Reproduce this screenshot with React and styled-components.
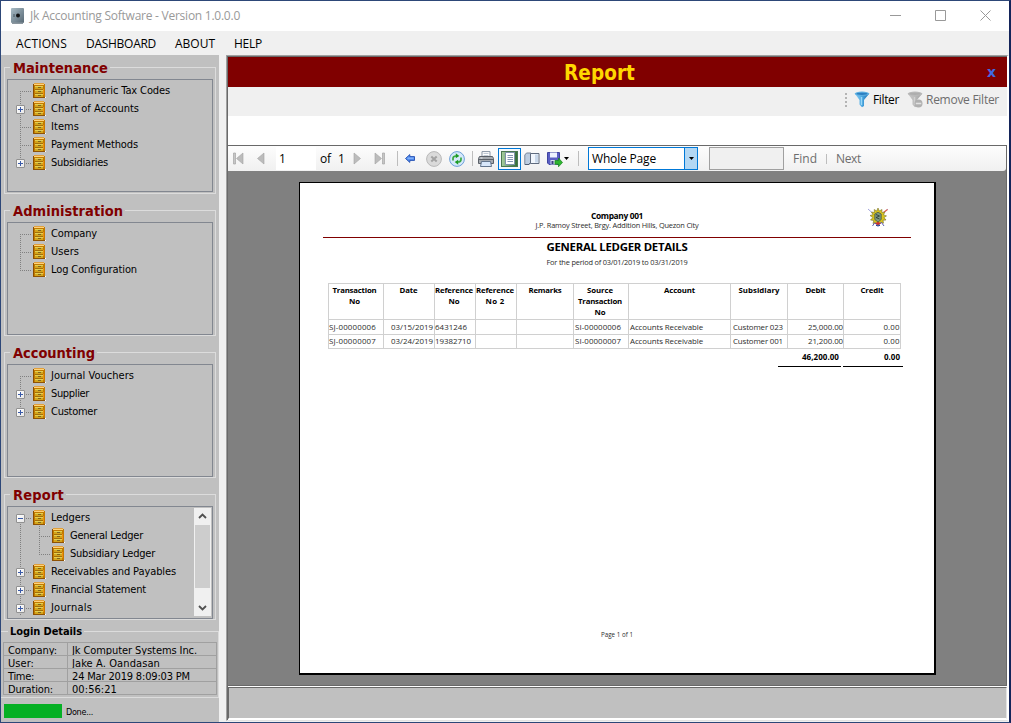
import React, { useLayoutEffect, useRef, useState } from "react";
import styled, { createGlobalStyle, css } from "styled-components";

const tahoma = `"DejaVu Sans Condensed", "DejaVu Sans", sans-serif`;
const segoe = `"Open Sans", "Noto Sans", sans-serif`;

const GlobalStyle = createGlobalStyle`
  *, *::before, *::after { box-sizing: border-box; }
  body { margin: 0; overflow: hidden; background: #f0f0f0; }
  svg { display: block; flex: none; }
`;

/* Text tracked so that it fills an exact width */
const TextSpan = styled.span`
  display: inline-block;
  white-space: pre;
  vertical-align: top;
`;

function Text({ w, children }) {
  const ref = useRef(null);
  const [spacing, setSpacing] = useState(0);
  useLayoutEffect(() => {
    const natural = ref.current.getBoundingClientRect().width;
    setSpacing((w - natural) / String(children).length);
  }, [w, children]);
  return (
    <TextSpan ref={ref} style={{ letterSpacing: `${spacing}px` }}>
      {children}
    </TextSpan>
  );
}

/* ---------- window frame ---------- */

const Window = styled.div`
  width: 1011px;
  height: 723px;
  display: flex;
  flex-direction: column;
  border: solid #2d4778;
  border-width: 1px 2px 1px 1px;
  border-right-color: #14245a;
  background: #f0f0f0;
  color: #000;
  font: 11px/18px ${tahoma};
  font-stretch: condensed;
`;

const TitleBar = styled.header`
  display: flex;
  align-items: center;
  height: 30px;
  padding: 0 18px 1px 10px;
  background: #fff;
  color: #999;
  font: 12px/28px ${segoe};
`;

const TitleText = styled.div`
  flex: 1;
  margin-left: 6px;
  padding-top: 1px;
`;

const WindowButtons = styled.div`
  display: flex;
  gap: 34px;
`;

const MenuBar = styled.nav`
  display: flex;
  height: 24px;
  padding: 1px 0 0 15px;
  gap: 19px;
  font: 12px/24px ${segoe};
`;

const Body = styled.div`
  flex: 1;
  display: flex;
  min-height: 0;
`;

/* ---------- sidebar ---------- */

const Sidebar = styled.aside`
  width: 218px;
  height: 667px;
  background: #c0c0c0;
  display: flex;
  flex-direction: column;
`;

const Group = styled.fieldset`
  margin: ${(p) => p.$top}px 3px 0;
  padding: 0 2px 1px;
  border: 1px solid #dcdcdc;
  height: ${(p) => p.$h}px;
  min-width: 0;
  width: 212px;
`;

const GroupTitle = styled.legend`
  height: 18px;
  padding: 0 2px 0 3px;
  margin-left: 3px;
  color: #800000;
  font: bold 14.5px/21px ${tahoma};
  font-stretch: condensed;
`;

const Tree = styled.div`
  display: flex;
  height: 113px;
  margin-top: 3px;
  border: 1px solid #828790;
  overflow: hidden;
`;

const TreeRows = styled.div`
  flex: 1;
  padding-top: 1px;
`;

const TreeRow = styled.div`
  display: flex;
  height: 18px;
  line-height: 19px;
`;

const NodeIcon = styled.span`
  width: 19px;
  padding: 2px 0 0 1px;
`;

const vDots = "repeating-linear-gradient(180deg, #808080 0 1px, transparent 1px 2px)";
const hDots = "repeating-linear-gradient(90deg, #808080 0 1px, transparent 1px 2px)";

const Guide = styled.span`
  display: flex;
  width: ${(p) => (p.$child ? 19 : 24)}px;
  padding: 6px 0 0 8px;
  background-repeat: no-repeat;
  ${(p) => {
    const x = p.$child ? 7 : 12;
    const top = p.$line === "down" ? 10 : 0;
    const height = { down: 8, up: 10, full: 18, through: 18 }[p.$line];
    const reach = p.$line === "through" ? 0 : p.$child ? 12 : 11;
    return css`
      background-image: ${vDots}, ${hDots};
      background-size: 1px ${height}px, ${reach}px 1px;
      background-position: ${x}px ${top}px, ${x}px 10px;
    `;
  }}
`;

const Expander = styled.span`
  width: 9px;
  height: 9px;
  border: 1px solid #919191;
  border-radius: 1px;
  background: linear-gradient(#3a5aa8, #3a5aa8) center / 5px 1px no-repeat,
    linear-gradient(#3a5aa8, #3a5aa8) center / 1px ${(p) => (p.$open ? 0 : 5)}px no-repeat,
    linear-gradient(135deg, #fff, #e8e8e8);
`;

const ScrollBar = styled.div`
  display: flex;
  flex-direction: column;
  width: 17px;
  height: 108px;
  margin: 1px;
  background: #f0f0f0;
`;

const ScrollButton = styled.div`
  display: grid;
  place-items: center;
  height: 17px;
`;

const ScrollThumb = styled.div`
  height: 63px;
  margin: 0 1px auto;
  background: #cdcdcd;
`;

const LoginGroup = styled.fieldset`
  width: 218px;
  height: 76px;
  margin: 2px 0 0;
  padding: 0 1px;
  border: solid #dcdcdc;
  border-width: 1px 1px 1px 0;
  min-width: 0;
`;

const LoginTitle = styled.legend`
  height: 18px;
  margin-left: 6px;
  padding: 0 2px;
  font-weight: bold;
  line-height: 19px;
`;

const LoginTable = styled.dl`
  display: grid;
  grid-template-columns: 64px 149px;
  grid-auto-rows: 13px;
  width: 214px;
  margin: 2px 0 0 1px;
  border: solid #a0a0a0;
  border-width: 1px 0 0 1px;
  line-height: 15px;
`;

const LoginCell = styled.div`
  overflow: hidden;
  margin: 0;
  padding-left: 4px;
  border: solid #a0a0a0;
  border-width: 0 1px 1px 0;
`;

const StatusRow = styled.footer`
  display: flex;
  margin: 6px 0 0 3px;
  font-size: 9px;
  line-height: 16px;
`;

const Progress = styled.div`
  width: 58px;
  height: 14px;
  margin-right: 4px;
  background: #06b025;
`;

/* ---------- main panel ---------- */

const Panel = styled.main`
  display: flex;
  flex-direction: column;
  width: 783px;
  height: 666px;
  margin-left: 7px;
  border: solid;
  border-width: 1px 2px 1px 1px;
  border-color: #a0a0a0 #fff #e3e3e3 #a0a0a0;
`;

const PanelInner = styled.div`
  flex: 1;
  display: flex;
  flex-direction: column;
  border: solid #696969;
  border-width: 1px 0 0 1px;
  background: #fff;
`;

const Banner = styled.div`
  display: flex;
  align-items: center;
  height: 30px;
  padding: 0 11px 0 336px;
  background: #800000;
  color: #ffd700;
  font: bold 20.5px/30px ${tahoma};
  font-stretch: condensed;
`;

const BannerTitle = styled.div`
  flex: 1;
  padding-top: 2px;
`;

const CloseTab = styled.span`
  color: #4169e1;
  font: bold 14px/26px "DejaVu Sans", sans-serif;
`;

const FilterBar = styled.div`
  display: flex;
  justify-content: flex-end;
  align-items: center;
  height: 29px;
  padding: 0 8px 4px 0;
  background: #f0f0f0;
  font: 12px/25px ${segoe};
`;

const Grip = styled.span`
  width: 2px;
  height: 14px;
  margin-right: 7px;
  background: repeating-linear-gradient(#b4b4b4 0 2px, transparent 2px 4px);
`;

const FilterButton = styled.span`
  display: flex;
  align-items: center;
  gap: 3px;
  margin-left: ${(p) => p.$left || 0}px;
  color: ${(p) => (p.$disabled ? "#6d6d6d" : "#000")};
`;

const Viewer = styled.section`
  height: 541px;
  margin-top: 29px;
  border: 1px solid #696969;
  border-left-width: 0;
  background: #808080;
`;

const ViewerBar = styled.div`
  display: flex;
  align-items: center;
  height: 25px;
  padding-left: 5px;
  border-radius: 0 0 3px 0;
  background: linear-gradient(#fdfdfd, #f0f0f0);
  font: 12px/23px ${segoe};
`;

const Item = styled.span`
  display: flex;
  flex: none;
  width: ${(p) => p.$w}px;
  margin-left: ${(p) => p.$left || 0}px;
  color: ${(p) => (p.$muted ? "#6d6d6d" : "#000")};
`;

const PageInput = styled(Item)`
  height: 23px;
  padding-left: 3px;
  background: #fff;
`;

const Divider = styled.span`
  flex: none;
  width: 1px;
  height: ${(p) => p.$h || 15}px;
  margin-left: ${(p) => p.$left}px;
  background: #bdbdbd;
`;

const Toggle = styled.span`
  display: grid;
  place-items: center;
  width: 23px;
  height: 22px;
  margin-left: 4px;
  border: 1px solid #0078d7;
  background: #f5f9fd;
`;

const Combo = styled.span`
  display: flex;
  justify-content: space-between;
  width: 110px;
  height: 23px;
  margin-left: 9px;
  padding-left: 3px;
  border: 1px solid #0078d7;
  background: #fff;
  line-height: 22px;
`;

const ComboArrow = styled.span`
  display: grid;
  place-items: center;
  width: 13px;
  border-left: 1px solid #0078d7;
  background: #b3d7f3;
`;

const SearchBox = styled.span`
  width: 75px;
  height: 23px;
  margin-left: 11px;
  border: 1px solid #a0a0a0;
  background: #f0f0f0;
`;

const BottomStrip = styled.div`
  flex: 1;
  margin: 1px 0 1px 0;
  border: solid;
  border-width: 1px;
  border-color: #696969 #e3e3e3 #fff #696969;
  background: #c0c0c0;
`;

/* ---------- report page ---------- */

const Paper = styled.article`
  display: flex;
  flex-direction: column;
  align-items: flex-start;
  width: 637px;
  height: 492px;
  margin: 11px 0 0 71px;
  border: 1px solid #000;
  box-shadow: inset -1px 0 #000, 0 1px #000;
  background: #fff;
  color: #2c2c2c;
  font: 7.4px/10px ${segoe};
`;

const ReportHead = styled.div`
  display: flex;
  width: 588px;
  height: 55px;
  margin-left: 23px;
  padding-top: 25px;
  border-bottom: 1px solid #800000;
`;

const HeadText = styled.div`
  flex: none;
  width: 336px;
  margin-left: 126px;
  padding-top: 3px;
  text-align: center;
`;

const CompanyName = styled.div`
  color: #000;
  font-size: 8.4px;
  font-weight: bold;
  line-height: 10px;
`;

const Address = styled.div`
  line-height: 9px;
`;

const EmblemSlot = styled.div`
  margin-left: 83px;
`;

const ReportTitle = styled.h1`
  margin: 1px 0 0;
  width: 634px;
  color: #000;
  font: bold 11.4px/15px ${segoe};
  text-align: center;
`;

const Period = styled.div`
  width: 634px;
  margin-top: 3px;
  padding-bottom: 1px;
  text-align: center;
`;

const Ledger = styled.div`
  display: grid;
  grid-template-columns: 55px 51px 41px 41px 57px 55px 102px 57px 56px 57px;
  grid-template-rows: 36px 15px 14px;
  margin: 15px 0 0 28px;
  border: solid #d0d0d0;
  border-width: 1px 0 0 1px;
`;

const HeadCell = styled.div`
  padding: 1px ${(p) => p.$nudge}px 0 0;
  border: solid #d0d0d0;
  border-width: 0 1px 1px 0;
  color: #000;
  font-size: 7.8px;
  font-weight: bold;
  line-height: 11px;
  text-align: center;
`;

const Cell = styled.div`
  padding: 0 ${(p) => p.$inset || 0}px 0 ${(p) => p.$left || 0}px;
  border: solid #d0d0d0;
  border-width: 0 1px 1px 0;
  font-size: 7.9px;
  line-height: ${(p) => (p.$last ? 12 : 14)}px;
  text-align: ${(p) => (p.$right ? "right" : "left")};
`;

const Totals = styled.div`
  display: flex;
  gap: 2px;
  margin: 1px 0 0 478px;
`;

const Total = styled.div`
  width: ${(p) => p.$w}px;
  height: 17px;
  padding-right: ${(p) => p.$pad}px;
  border-bottom: 1px solid #000;
  color: #000;
  font-size: 8px;
  font-weight: bold;
  line-height: 14px;
  text-align: right;
`;

const PageNumber = styled.div`
  width: 634px;
  margin-top: 263px;
  font-size: 6.2px;
  text-align: center;
`;

/* ---------- icons ---------- */

const SafeIcon = () => (
  <svg width="13" height="16" viewBox="0 0 13 16">
    <defs>
      <linearGradient id="safe" x2="1" y2="1">
        <stop stopColor="#a9bcc6" />
        <stop offset="1" stopColor="#576874" />
      </linearGradient>
    </defs>
    <rect width="13" height="15" rx="1" fill="url(#safe)" />
    <path d="M1 14.500h11V16H1z" fill="#8b969e" />
    <circle cx="7" cy="7.500" r="2" fill="#111" />
    <path d="M3 6v3" stroke="#45545e" />
  </svg>
);

const CabinetIcon = () => (
  <svg width="13" height="15" viewBox="0 0 13 15" shapeRendering="crispEdges">
    <path d="M0 1h12v14H0z" fill="#c27a00" />
    <path d="M1 0h10v1H1z" fill="#e0a03c" />
    <path d="M1 1h10v1H1z" fill="#ffd27a" />
    <path d="M0 1h1v14H0z" fill="#8a4d00" />
    <path d="M2 3h8v3H2zM2 7h8v3H2zM2 11h8v3H2z" fill="#d3a51c" />
    <path d="M2 3h8v1H2zM2 7h8v1H2zM2 11h8v1H2z" fill="#e2cf55" />
    <path d="M2 6h8v1H2zM2 10h8v1H2z" fill="#a56e08" />
    <path d="M5 4h3v1H5zM5 8h3v1H5zM5 12h3v1H5z" fill="#7f6420" />
    <path d="M10 6h1v6h-1z" fill="#ee8f0c" />
    <path d="M0 14h12v1H0z" fill="#8f5204" />
    <path d="M12 14h1v1h-1z" fill="#fff" />
  </svg>
);

const Chevron = ({ up }) => (
  <svg width="9" height="7" viewBox="0 0 9 7">
    <path d={up ? "M1 5 4.500 1.500 8 5" : "M1 2 4.500 5.500 8 2"} fill="none" stroke="#505050" strokeWidth="1.800" />
  </svg>
);

const FunnelIcon = ({ off }) => (
  <svg width="16" height="17" viewBox="0 0 16 17">
    <defs>
      <linearGradient id={off ? "funnelOff" : "funnel"} x2="1">
        <stop stopColor={off ? "#c9c9c9" : "#8fd0f4"} />
        <stop offset=".5" stopColor={off ? "#b9b9b9" : "#4ba7e0"} />
        <stop offset="1" stopColor={off ? "#a4a4a4" : "#1c6cad"} />
      </linearGradient>
    </defs>
    <path d="M.7 2.500 5.500 9v4.500l2.500 2.700 2-1.200V9l5.300-6.500z" fill={`url(#${off ? "funnelOff" : "funnel"})`} />
    <ellipse cx="8" cy="2.700" rx="7.300" ry="2.100" fill={off ? "#b9b9b9" : "#5fb0e2"} />
    <ellipse cx="8" cy="2.800" rx="5.500" ry="1.100" fill={off ? "#adadad" : "#2c7fc0"} />
    <path d="M7.500 6v8" stroke={off ? "#d0d0d0" : "#9ad8f8"} strokeWidth="1.400" />
    {off && (
      <g>
        <circle cx="11.500" cy="12.500" r="4" fill="#b0b0b0" />
        <path d="M8.800 12.500h5.500" stroke="#e2e2e2" strokeWidth="1.600" />
      </g>
    )}
  </svg>
);

const NavIcon = ({ back, bar }) => (
  <svg width={bar ? 11 : 8} height="13" viewBox={bar ? "0 0 11 13" : "0 0 8 13"}>
    <g transform={back ? undefined : bar ? "matrix(-1 0 0 1 11 0)" : "matrix(-1 0 0 1 8 0)"}>
      {bar && <path d="M.5 1h2v11h-2z" fill="#c6c6c6" stroke="#a5a5a5" strokeWidth=".7" />}
      <path
        d={bar ? "M10 1v11L3.500 6.500z" : "M7 1v11L.5 6.500z"}
        fill="#bcbcbc"
        stroke="#a3a3a3"
        strokeWidth=".6"
      />
    </g>
  </svg>
);

const BackIcon = () => (
  <svg width="10" height="9" viewBox="0 0 10 9">
    <path d="M.5 4.500 4.800.6v2H9.500v3.800H4.800v2z" fill="#5590ef" stroke="#204cb0" strokeWidth=".9" />
    <path d="M2.500 4.200h6" stroke="#94bdff" />
  </svg>
);

const StopIcon = () => (
  <svg width="16" height="16" viewBox="0 0 16 16">
    <circle cx="8" cy="8" r="7.400" fill="#dadada" stroke="#b8b8b8" />
    <path d="m5.300 5.500 5.400 5M10.700 5.500l-5.400 5" stroke="#a2a2a2" strokeWidth="2" />
  </svg>
);

const RefreshIcon = () => (
  <svg width="16" height="16" viewBox="0 0 16 16">
    <circle cx="8" cy="8" r="7.400" fill="#d5e9fb" stroke="#6c9fd8" />
    <path d="M4 9.500V7.500Q4 5 7 5M12 6.500v2q0 2.500-3 2.500" fill="none" stroke="#3aa83f" strokeWidth="1.700" />
    <path d="M6.800 2.300v5L10.300 5zM9.200 8.700v5L5.700 11z" fill="#1c9b25" />
  </svg>
);

const PrinterIcon = () => (
  <svg width="16" height="16" viewBox="0 0 16 16">
    <path d="M4 6V.6h8V6" fill="#fff" stroke="#8794a5" />
    <path d="M5.500 2.500h5M5.500 4.500h5" stroke="#c0cad6" />
    <path d="M1.500 5.500h13l1 2v5H.5v-5z" fill="#a5aab0" stroke="#5a6068" />
    <path d="M1 8.500h14" stroke="#5a6068" />
    <path d="M3.500 10.500h9l1 5h-11z" fill="#d8e7fa" stroke="#63758d" />
    <path d="M2.500 7h2" stroke="#e9edf2" />
  </svg>
);

const LayoutIcon = () => (
  <svg width="17" height="16" viewBox="0 0 17 16">
    <defs>
      <linearGradient id="layout" x2="1">
        <stop stopColor="#a8cfa0" />
        <stop offset="1" stopColor="#2f6a35" />
      </linearGradient>
    </defs>
    <rect x=".5" y=".5" width="16" height="15" fill="url(#layout)" stroke="#4a7850" />
    <path d="M4.500 1.500h9v12h-9z" fill="#fff" stroke="#7e92aa" />
    <path d="M6.500 4.500h5.500M6.500 6.500h5.500M6.500 8.500h5.500M6.500 10.500h5.500" stroke="#8296b2" />
  </svg>
);

const PageSetupIcon = () => (
  <svg width="16" height="14" viewBox="0 0 16 14">
    <path d="M.8 3 2.500 1H7v9l-2 2.500H.8z" fill="#bdcde0" stroke="#7a8799" />
    <path d="M1 12.500h4L7 10" fill="none" stroke="#526075" />
    <path d="M6.500 1.500h8.500v10H6.500z" fill="#f2f7fd" stroke="#5f6b7e" />
    <path d="M12.500 2.500v8" stroke="#c9d8ea" strokeWidth="3" />
  </svg>
);

const SaveIcon = () => (
  <svg width="16" height="16" viewBox="0 0 16 16">
    <path d="M.5 1.500h12v12H2l-1.500-1.500z" fill="#5a5fc4" stroke="#4044a0" />
    <path d="M3 1.500h7v5H3z" fill="#edf2ff" />
    <path d="M3.500 9h6v4.500h-6z" fill="#d5dcec" />
    <path d="M4.500 10h2v3h-2z" fill="#393d80" />
    <path d="M8 9.500h3.500V7l4 4.500-4 4.300v-2.500H8z" fill="#2fb52f" stroke="#17851c" strokeWidth=".7" />
  </svg>
);

const Caret = () => (
  <svg width="5" height="3" viewBox="0 0 5 3">
    <path d="M0 0h5L2.500 3z" fill="#000" />
  </svg>
);

const Emblem = () => (
  <svg width="20" height="20" viewBox="0 0 20 20">
    <path d="m0 1 9 8M20 1l-9 8" stroke="#a3a5dc" />
    <path d="m15.500 4.500 4-3" stroke="#e2604c" strokeWidth="1.200" />
    <path
      d="m10 0 1.300 3L14 1.500l-.2 3 3-.3-1.300 2.700 3 1-2.500 1.700 2 2.400-3 .2.500 3-2.800-1L10 18l-2-3.500-3 1 .8-3-3.300-.5L4.800 9.600 2 7.500l3-.8L3.500 4l3 .5-.3-3L8.700 3z"
      fill="#d8c31c"
      stroke="#77722a"
      strokeWidth=".6"
    />
    <path d="M6.800 6 10 4.200 13.200 6v5.500L10 14l-3.200-2.500z" fill="#7f9a80" stroke="#3c4d3e" strokeWidth=".7" />
    <path d="m8 6.500 3.500 1.500-3.500 1.500L11.500 11" fill="none" stroke="#26342f" strokeWidth=".8" />
    <path d="m4.500 18 2-3 3.500 2 3.500-2.500 2.500 3.500" fill="none" stroke="#5a5eb5" />
    <path d="m7 15.500 3-1.800 3 1.800-3 1.500z" fill="#cc302b" />
    <path d="m8 17.300 2 .7 2-.7" fill="none" stroke="#233ba2" />
  </svg>
);

/* ---------- data ---------- */

const menu = [["ACTIONS", 51], ["DASHBOARD", 70], ["ABOUT", 40], ["HELP", 28]];

const groups = [
  {
    title: "Maintenance", titleWidth: 95, top: 3, height: 136,
    nodes: [
      { label: "Alphanumeric Tax Codes", w: 119, line: "down" },
      { label: "Chart of Accounts", w: 88, line: "full", box: true },
      { label: "Items", w: 28, line: "full" },
      { label: "Payment Methods", w: 87, line: "full" },
      { label: "Subsidiaries", w: 57, line: "up", box: true },
    ],
  },
  {
    title: "Administration", titleWidth: 110, top: 7, height: 135,
    nodes: [
      { label: "Company", w: 46, line: "down" },
      { label: "Users", w: 28, line: "full" },
      { label: "Log Configuration", w: 86, line: "up" },
    ],
  },
  {
    title: "Accounting", titleWidth: 82, top: 7, height: 135,
    nodes: [
      { label: "Journal Vouchers", w: 83, line: "down" },
      { label: "Supplier", w: 38, line: "full", box: true },
      { label: "Customer", w: 46, line: "up", box: true },
    ],
  },
  {
    title: "Report", titleWidth: 51, top: 7, height: 135, scroll: true,
    nodes: [
      { label: "Ledgers", w: 39, line: "down", box: true, open: true },
      { label: "General Ledger", w: 73, line: "through", child: "full" },
      { label: "Subsidiary Ledger", w: 85, line: "through", child: "up" },
      { label: "Receivables and Payables", w: 125, line: "full", box: true },
      { label: "Financial Statement", w: 95, line: "full", box: true },
      { label: "Journals", w: 41, line: "full", box: true },
    ],
  },
];

const login = [
  ["Company:", 49, "Jk Computer Systems Inc.", 125],
  ["User:", 26, "Jake A. Oandasan", 88],
  ["Time:", 26, "24 Mar 2019 8:09:03 PM", 118],
  ["Duration:", 45, "00:56:21", 45],
];

const headers = [
  { nudge: 3, lines: [["Transaction", 44], ["No", 11]] },
  { nudge: 1, lines: [["Date", 18]] },
  { nudge: 2, lines: [["Reference", 38], ["No", 11]] },
  { nudge: 2, lines: [["Reference", 38], ["No 2", 19]] },
  { nudge: 0, lines: [["Remarks", 33]] },
  { nudge: 2, lines: [["Source", 26], ["Transaction", 44], ["No", 11]] },
  { nudge: 0, lines: [["Account", 31]] },
  { nudge: 0, lines: [["Subsidiary", 41]] },
  { nudge: 0, lines: [["Debit", 20]] },
  { nudge: 0, lines: [["Credit", 23]] },
];

const rows = [
  [["SJ-00000006", 47], ["03/15/2019", 42], ["6431246", 32], null, null, ["SI-00000006", 46], ["Accounts Receivable", 73], ["Customer 023", 50], ["25,000.00", 35], ["0.00", 16]],
  [["SJ-00000007", 47], ["03/24/2019", 42], ["19382710", 36], null, null, ["SI-00000007", 46], ["Accounts Receivable", 73], ["Customer 001", 50], ["21,200.00", 35], ["0.00", 16]],
];
const rightInset = { 1: 1, 8: 0, 9: 0.5 };
const leftInset = { 5: 1, 6: 1, 7: 2 };

/* ---------- sections ---------- */

function TreeGroup({ group }) {
  return (
    <Group $top={group.top} $h={group.height}>
      <GroupTitle><Text w={group.titleWidth}>{group.title}</Text></GroupTitle>
      <Tree>
        <TreeRows>
          {group.nodes.map((n) => (
            <TreeRow key={n.label}>
              <Guide $line={n.line}>{n.box && <Expander $open={n.open} />}</Guide>
              {n.child && <Guide $child $line={n.child} />}
              <NodeIcon><CabinetIcon /></NodeIcon>
              <Text w={n.w}>{n.label}</Text>
            </TreeRow>
          ))}
        </TreeRows>
        {group.scroll && (
          <ScrollBar>
            <ScrollButton><Chevron up /></ScrollButton>
            <ScrollThumb />
            <ScrollButton><Chevron /></ScrollButton>
          </ScrollBar>
        )}
      </Tree>
    </Group>
  );
}

function ViewerToolbar() {
  return (
    <ViewerBar>
      <NavIcon back bar />
      <Item $w={8} $left={13}><NavIcon back /></Item>
      <PageInput $w={40} $left={11}><Text w={6}>1</Text></PageInput>
      <Item $w={11} $left={4}><Text w={11}>of</Text></Item>
      <Item $w={7} $left={7}><Text w={6}>1</Text></Item>
      <Item $w={8} $left={8}><NavIcon /></Item>
      <Item $w={11} $left={13}><NavIcon bar /></Item>
      <Divider $left={12} />
      <Item $w={10} $left={7}><BackIcon /></Item>
      <Item $w={16} $left={11}><StopIcon /></Item>
      <Item $w={16} $left={7}><RefreshIcon /></Item>
      <Divider $left={7} />
      <Item $w={16} $left={5}><PrinterIcon /></Item>
      <Toggle><LayoutIcon /></Toggle>
      <Item $w={16} $left={3}><PageSetupIcon /></Item>
      <Item $w={16} $left={7}><SaveIcon /></Item>
      <Item $w={5} $left={1}><Caret /></Item>
      <Divider $left={9} />
      <Combo>
        <Text w={64}>Whole Page</Text>
        <ComboArrow><Caret /></ComboArrow>
      </Combo>
      <SearchBox />
      <Item $w={24} $left={9} $muted><Text w={24}>Find</Text></Item>
      <Divider $left={9} $h={10} />
      <Item $w={25} $left={9} $muted><Text w={25}>Next</Text></Item>
    </ViewerBar>
  );
}

function ReportPage() {
  return (
    <Paper>
      <ReportHead>
        <HeadText>
          <CompanyName><Text w={52}>Company 001</Text></CompanyName>
          <Address><Text w={163}>J.P. Ramoy Street, Brgy. Addition Hills, Quezon City</Text></Address>
        </HeadText>
        <EmblemSlot><Emblem /></EmblemSlot>
      </ReportHead>
      <ReportTitle><Text w={141}>GENERAL LEDGER DETAILS</Text></ReportTitle>
      <Period><Text w={141}>For the period of 03/01/2019 to 03/31/2019</Text></Period>
      <Ledger>
        {headers.map((h, i) => (
          <HeadCell key={i} $nudge={h.nudge}>
            {h.lines.map(([t, w]) => <div key={t}><Text w={w}>{t}</Text></div>)}
          </HeadCell>
        ))}
        {rows.map((row, r) =>
          row.map((c, i) => (
            <Cell
              key={`${r}-${i}`}
              $last={r === rows.length - 1}
              $right={i in rightInset}
              $inset={rightInset[i]}
              $left={leftInset[i]}
            >
              {c && <Text w={c[1]}>{c[0]}</Text>}
            </Cell>
          ))
        )}
      </Ledger>
      <Totals>
        <Total $w={63} $pad={2}><Text w={37}>46,200.00</Text></Total>
        <Total $w={60} $pad={3}><Text w={16}>0.00</Text></Total>
      </Totals>
      <PageNumber><Text w={32}>Page 1 of 1</Text></PageNumber>
    </Paper>
  );
}

export default function App() {
  return (
    <>
      <GlobalStyle />
      <Window>
        <TitleBar>
          <SafeIcon />
          <TitleText><Text w={210}>Jk Accounting Software - Version 1.0.0.0</Text></TitleText>
          <WindowButtons>
            <svg width="11" height="11"><path d="M0 5.500h11" stroke="#999" /></svg>
            <svg width="11" height="11"><path d="M.5.500h10v10H.5z" fill="none" stroke="#999" /></svg>
            <svg width="11" height="11"><path d="m.5.500 10 10M10.500.500l-10 10" stroke="#999" /></svg>
          </WindowButtons>
        </TitleBar>
        <MenuBar>
          {menu.map(([label, w]) => <Text key={label} w={w}>{label}</Text>)}
        </MenuBar>
        <Body>
          <Sidebar>
            {groups.map((g) => <TreeGroup key={g.title} group={g} />)}
            <LoginGroup>
              <LoginTitle><Text w={72}>Login Details</Text></LoginTitle>
              <LoginTable>
                {login.map(([k, kw, v, vw]) => (
                  <React.Fragment key={k}>
                    <LoginCell as="dt"><Text w={kw}>{k}</Text></LoginCell>
                    <LoginCell as="dd"><Text w={vw}>{v}</Text></LoginCell>
                  </React.Fragment>
                ))}
              </LoginTable>
            </LoginGroup>
            <StatusRow><Progress /><Text w={27}>Done...</Text></StatusRow>
          </Sidebar>
          <Panel>
            <PanelInner>
              <Banner>
                <BannerTitle><Text w={71}>Report</Text></BannerTitle>
                <CloseTab>x</CloseTab>
              </Banner>
              <FilterBar>
                <Grip />
                <FilterButton><FunnelIcon /><Text w={26}>Filter</Text></FilterButton>
                <FilterButton $left={8} $disabled><FunnelIcon off /><Text w={73}>Remove Filter</Text></FilterButton>
              </FilterBar>
              <Viewer>
                <ViewerToolbar />
                <ReportPage />
              </Viewer>
              <BottomStrip />
            </PanelInner>
          </Panel>
        </Body>
      </Window>
    </>
  );
}
